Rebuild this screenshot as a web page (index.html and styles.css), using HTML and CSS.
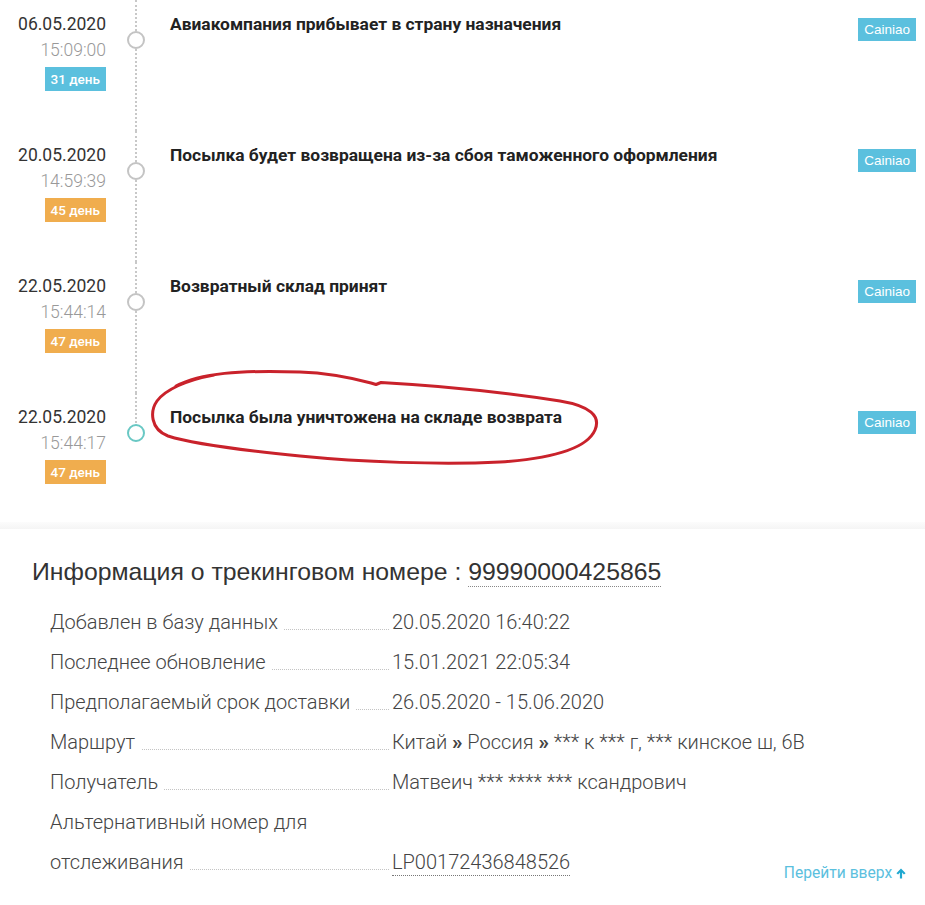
FILE: index.html
```html
<!DOCTYPE html>
<html lang="ru">
<head>
<meta charset="utf-8">
<title>Трекинг</title>
<link rel="stylesheet" href="styles.css">
</head>
<body>
<div class="page">
  <div class="timeline">
    <div class="event">
      <div class="when">
        <div class="date">06.05.2020</div>
        <div class="time">15:09:00</div>
        <span class="days days-blue">31 день</span>
      </div>
      <div class="axis"><span class="dot"></span></div>
      <div class="what">Авиакомпания прибывает в страну назначения</div>
      <div class="src"><span class="tag">Cainiao</span></div>
    </div>
    <div class="event">
      <div class="when">
        <div class="date">20.05.2020</div>
        <div class="time">14:59:39</div>
        <span class="days days-orange">45 день</span>
      </div>
      <div class="axis"><span class="dot"></span></div>
      <div class="what">Посылка будет возвращена из-за сбоя таможенного оформления</div>
      <div class="src"><span class="tag">Cainiao</span></div>
    </div>
    <div class="event">
      <div class="when">
        <div class="date">22.05.2020</div>
        <div class="time">15:44:14</div>
        <span class="days days-orange">47 день</span>
      </div>
      <div class="axis"><span class="dot"></span></div>
      <div class="what">Возвратный склад принят</div>
      <div class="src"><span class="tag">Cainiao</span></div>
    </div>
    <div class="event event-last">
      <div class="when">
        <div class="date">22.05.2020</div>
        <div class="time">15:44:17</div>
        <span class="days days-orange">47 день</span>
      </div>
      <div class="axis"><span class="dot dot-current"></span></div>
      <div class="what">Посылка была уничтожена на складе возврата</div>
      <div class="src"><span class="tag">Cainiao</span></div>
    </div>
  </div>

  <div class="separator"></div>

  <div class="info">
    <h2 class="info-title">Информация о трекинговом номере : <span class="num">99990000425865</span></h2>
    <div class="info-body">
      <div class="rows">
        <div class="row"><div class="label"><span>Добавлен в базу данных</span></div><div class="value">20.05.2020 16:40:22</div></div>
        <div class="row"><div class="label"><span>Последнее обновление</span></div><div class="value">15.01.2021 22:05:34</div></div>
        <div class="row"><div class="label"><span>Предполагаемый срок доставки</span></div><div class="value">26.05.2020 - 15.06.2020</div></div>
        <div class="row"><div class="label"><span>Маршрут</span></div><div class="value">Китай <span class="sep">»</span> Россия <span class="sep">»</span> *** к *** г, *** кинское ш, 6В</div></div>
        <div class="row"><div class="label"><span>Получатель</span></div><div class="value">Матвеич *** **** *** ксандрович</div></div>
        <div class="row"><div class="label"><span>Альтернативный номер для отслеживания</span></div><div class="value"><span class="link-num">LP00172436848526</span></div></div>
      </div>
      <a class="to-top" href="#">Перейти вверх <svg class="arrow" width="10" height="11" viewBox="0 0 10 11"><path d="M5 0.5 L9.6 5.2 L7.9 6.4 L6.1 4.6 L6.1 10.5 L3.9 10.5 L3.9 4.6 L2.1 6.4 L0.4 5.2 Z" fill="#1fa8d0"/></svg></a>
    </div>
  </div>

  <svg class="scribble" width="925" height="905" viewBox="0 0 925 905">
    <path d="M176 386 C200 373, 240 370, 300 372 C330 373, 356 379, 371 383 L376 384.5 L381 382.5 C430 385, 500 392, 560 401 C590 406, 601 416, 595 430 C588 446, 560 458, 500 462 C440 465, 360 462, 300 456 C240 450, 190 443, 168 436 C150 429, 150 411, 157 401 C165 390, 186 380, 214 375" fill="none" stroke="#c9222b" stroke-width="3" stroke-linecap="round" stroke-linejoin="round"/>
  </svg>
</div>
</body>
</html>
```
FILE: styles.css
```css
html, body {
  margin: 0;
  padding: 0;
  background: #fff;
}
body {
  font-family: Roboto, "Noto Sans", sans-serif;
  color: #333;
}
.page {
  position: relative;
  width: 925px;
  height: 905px;
  overflow: hidden;
}

/* timeline */
.timeline {
  display: flex;
  flex-direction: column;
}
.event {
  display: grid;
  grid-template-columns: 106px 30px 1fr auto;
  column-gap: 16px;
  height: 131px;
  box-sizing: border-box;
  padding-top: 13px;
  padding-right: 9px;
  position: relative;
}
.event-last {
  height: 129px;
}
.when {
  text-align: right;
}
.date {
  font-size: 17.5px;
  line-height: 22px;
  color: #333;
}
.time {
  font-size: 17.5px;
  font-weight: 300;
  line-height: 22px;
  margin-top: 4px;
  color: #999;
}
.days {
  display: inline-block;
  margin-top: 6px;
  height: 24px;
  line-height: 24px;
  padding: 0 6px;
  font-size: 13.5px;
  font-weight: 500;
  color: #fff;
}
.days-blue { background: #5bc0de; }
.days-orange { background: #f0ad4e; }

.axis {
  position: relative;
  margin-top: -13px;
  margin-left: -1px;
}
.axis::before {
  content: "";
  position: absolute;
  left: 14px;
  top: 0;
  bottom: 0;
  border-left: 2px dotted #c8c8c8;
}
.event-last .axis::before {
  bottom: auto;
  height: 34px;
}
.dot {
  position: absolute;
  left: 6px;
  top: 31px;
  width: 14px;
  height: 14px;
  border: 2px solid #c4c4c4;
  border-radius: 50%;
  background: #fff;
}
.dot-current {
  border-color: #69c8c4;
}
.what {
  margin-left: 2px;
  font-size: 17.4px;
  font-weight: 700;
  line-height: 22px;
  color: #222;
}
.src {
  padding-top: 5px;
}
.tag {
  display: inline-block;
  height: 23px;
  line-height: 23px;
  padding: 0 6px;
  background: #5bc0de;
  color: #fff;
  font-family: "Liberation Sans", Arial, sans-serif;
  font-size: 13.5px;
}

.separator {
  height: 7px;
  background: linear-gradient(to bottom, #fcfcfc, #f5f5f5);
}

/* info */
.info {
  padding-top: 28px;
}
.info-title {
  margin: 0 0 15px 32px;
  font-family: "Liberation Sans", Arial, sans-serif;
  font-weight: 400;
  font-size: 24.8px;
  line-height: 30px;
  color: #333;
}
.num {
  border-bottom: 1px dotted #888;
  padding-bottom: 1px;
}
.info-body {
  display: flex;
  justify-content: space-between;
  align-items: flex-end;
}
.rows {
  flex: 1;
  min-width: 0;
  padding-left: 50px;
}
.row {
  display: flex;
  align-items: flex-end;
  font-size: 20px;
  font-weight: 300;
  line-height: 40px;
  color: #444;
}
.label {
  width: 340px;
  flex: none;
  background-image: linear-gradient(to right, #c4c4c4 1px, transparent 1px);
  background-size: 2px 1px;
  background-repeat: repeat-x;
  background-position: 0 calc(100% - 12px);
}
.label span {
  background: #fff;
  padding-right: 6px;
}
.value {
  padding-left: 2px;
  white-space: nowrap;
}
.sep {
  font-weight: 700;
  font-size: 21px;
}
.link-num {
  border-bottom: 1px dotted #777;
  padding-bottom: 1px;
}
.to-top {
  flex: none;
  margin-right: 19px;
  font-size: 15.6px;
  line-height: 18px;
  color: #5bc0de;
  text-decoration: none;
  font-weight: 400;
  white-space: nowrap;
}
.arrow {
  vertical-align: -1px;
}

.scribble {
  position: absolute;
  left: 0;
  top: 0;
  pointer-events: none;
}
```
